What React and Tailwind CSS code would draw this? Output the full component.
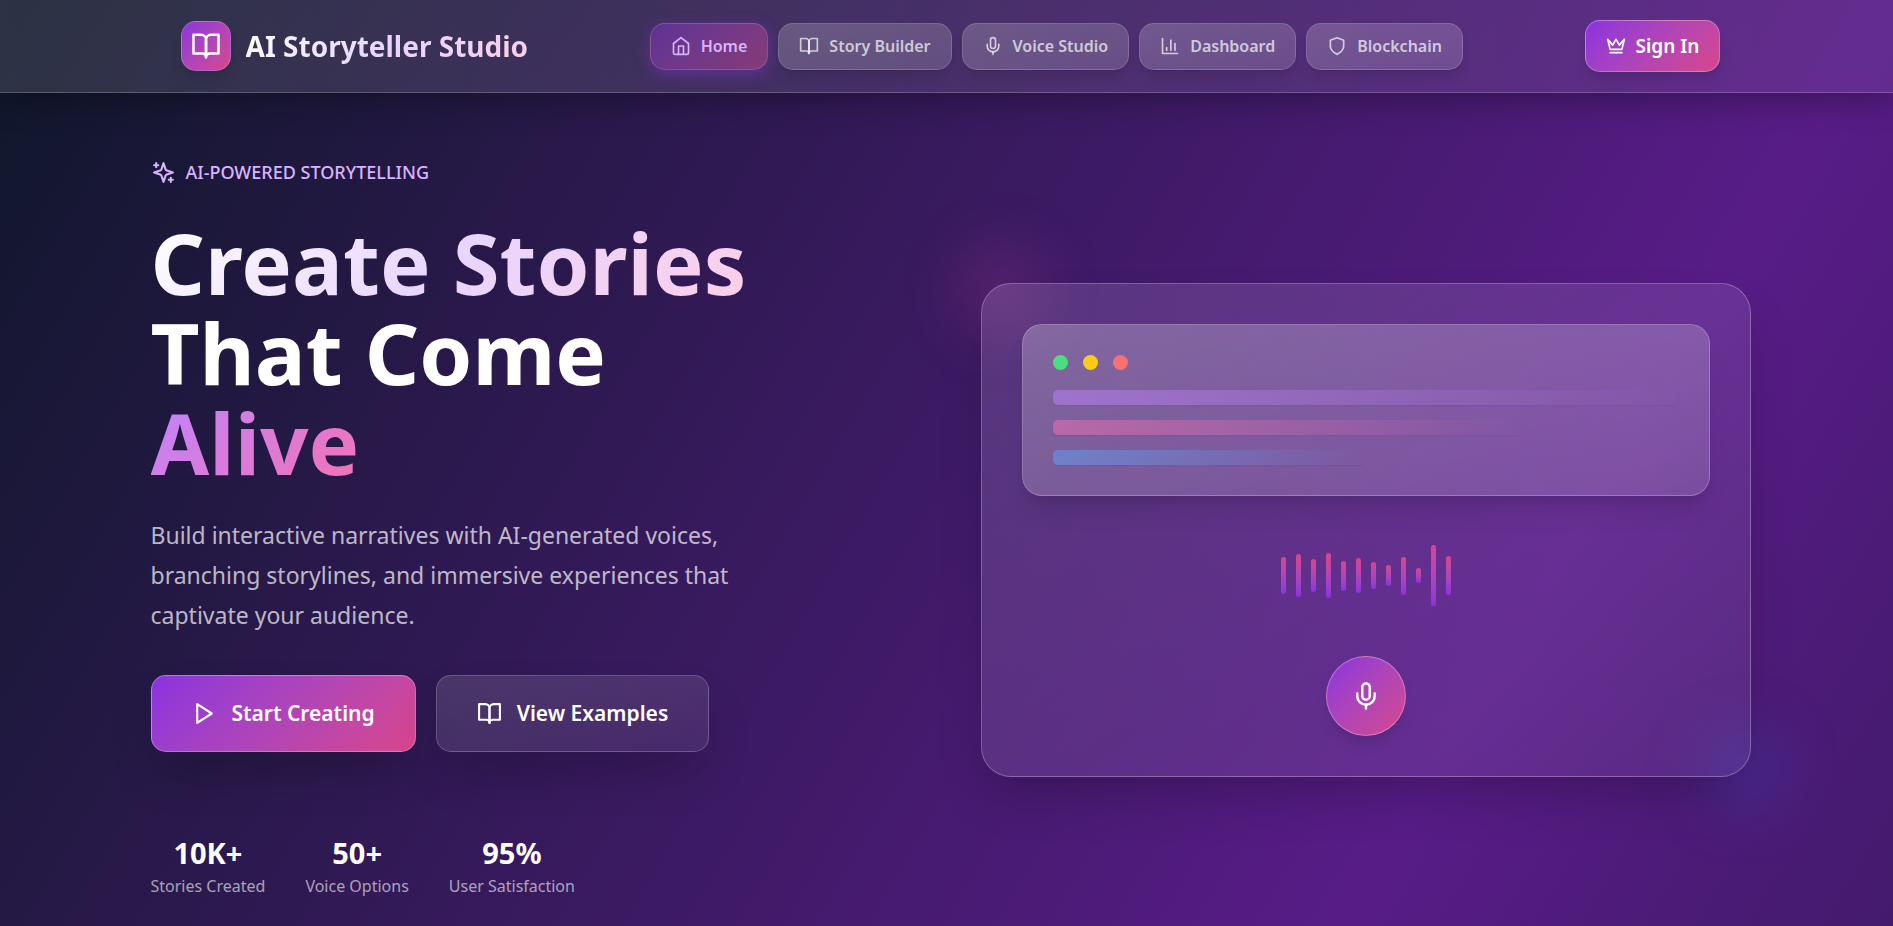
import React from 'react'

const icons = {
  home: ['m3 9 9-7 9 7v11a2 2 0 0 1-2 2H5a2 2 0 0 1-2-2z', 'M9 22V12h6v10'],
  book: ['M2 3h6a4 4 0 0 1 4 4v14a3 3 0 0 0-3-3H2z', 'M22 3h-6a4 4 0 0 0-4 4v14a3 3 0 0 1 3-3h7z'],
  mic: ['M12 2a3 3 0 0 0-3 3v7a3 3 0 0 0 6 0V5a3 3 0 0 0-3-3Z', 'M19 10v2a7 7 0 0 1-14 0v-2', 'M12 19v3'],
  chart: ['M3 3v18h18', 'M18 17V9', 'M13 17V5', 'M8 17v-3'],
  shield: ['M12 22s8-4 8-10V5l-8-3-8 3v7c0 6 8 10 8 10'],
  crown: ['m2 4 3 12h14l3-12-6 7-4-7-4 7-6-7zm3 16h14'],
  play: ['m5 3 14 9-14 9z'],
  sparkles: [
    'm12 3-1.912 5.813a2 2 0 0 1-1.275 1.275L3 12l5.813 1.912a2 2 0 0 1 1.275 1.275L12 21l1.912-5.813a2 2 0 0 1 1.275-1.275L21 12l-5.813-1.912a2 2 0 0 1-1.275-1.275L12 3Z',
    'M5 3v4',
    'M19 17v4',
    'M3 5h4',
    'M17 19h4',
  ],
}

function Icon({ name, size = 20 }) {
  return (
    <svg width={size} height={size} viewBox="0 0 24 24" fill="none" stroke="currentColor" strokeWidth="2" strokeLinecap="round" strokeLinejoin="round" aria-hidden="true">
      {icons[name].map(d => <path key={d} d={d} />)}
    </svg>
  )
}

const navItems = [
  { name: 'Home', icon: 'home', active: true },
  { name: 'Story Builder', icon: 'book' },
  { name: 'Voice Studio', icon: 'mic' },
  { name: 'Dashboard', icon: 'chart' },
  { name: 'Blockchain', icon: 'shield' },
]

const stats = [
  { value: '10K+', label: 'Stories Created' },
  { value: '50+', label: 'Voice Options' },
  { value: '95%', label: 'User Satisfaction' },
]

const bars = [37, 43, 33, 45, 30, 35, 27, 21, 38, 15, 61, 39]

const glass = 'border-white/15 bg-linear-to-br from-white/20 to-white/15 text-white/70 shadow-lg'
const activeGlass = 'border-white/15 bg-linear-135 from-[#9333ea]/40 to-[#ec4899]/40 text-[#d8b4fe] shadow-[0_4px_15px_rgba(147,51,234,0.4)]'

function Header() {
  return (
    <header className="border-b border-white/20 bg-linear-to-r from-white/12 to-white/7 pl-2 shadow-[0_8px_32px_rgba(0,0,0,0.3)]">
      <div className="mx-auto flex h-[92px] max-w-[1600px] items-center justify-between px-[30px]">
        <a href="#" className="flex items-center gap-[15px]">
          <span className="flex size-[50px] items-center justify-center rounded-[15px] border border-white/20 bg-linear-135 from-[#8b31df] to-[#d8458c] text-white shadow-lg">
            <Icon name="book" size={30} />
          </span>
          <span className="bg-[linear-gradient(135deg,#fff,#e9d5ff,#fbcfe8)] bg-clip-text text-[28px] font-bold text-transparent">AI Storyteller Studio</span>
        </a>
        <nav className="flex items-center gap-[10px]">
          {navItems.map(({ name, icon, active }) => (
            <a
              key={name}
              href="#"
              className={`flex h-[47px] items-center gap-[10px] rounded-[15px] border px-5 text-[16px] font-semibold ${active ? activeGlass : glass}`}
            >
              <Icon name={icon} />
              <span>{name}</span>
            </a>
          ))}
        </nav>
        <button className="flex h-[52px] items-center gap-[10px] rounded-[15px] border border-white/30 bg-linear-135 from-[#8b31df] to-[#d8458c] px-5 text-[19px] font-semibold text-white shadow-lg">
          <Icon name="crown" />
          Sign In
        </button>
      </div>
    </header>
  )
}

function Hero() {
  return (
    <section>
      <div className="flex items-center gap-[10px] text-[#d8b4fe]">
        <Icon name="sparkles" size={25} />
        <span className="text-[18px] leading-[25px] font-medium uppercase">AI-Powered Storytelling</span>
      </div>
      <h1 className="mt-8 text-[85px] leading-[90px] font-bold text-white">
        <span className="block w-fit bg-[linear-gradient(135deg,#fff,#e9d5ff,#fbcfe8)] bg-clip-text text-transparent">Create Stories</span>
        <span className="block">That Come</span>
        <span className="block w-fit bg-[linear-gradient(135deg,#c084fc,#f472b6)] bg-clip-text text-transparent">Alive</span>
      </h1>
      <p className="mt-7 max-w-[620px] text-[23px] leading-[40px] text-white/70">
        Build interactive narratives with AI-generated voices, branching storylines, and immersive experiences that captivate your audience.
      </p>
      <div className="mt-10 flex gap-5">
        <button className="flex h-[77px] items-center gap-[15px] rounded-[15px] border border-white/30 bg-linear-135 from-[#8b31df] to-[#d8458c] px-10 text-[21px] font-semibold text-white shadow-2xl">
          <Icon name="play" size={25} />
          Start Creating
        </button>
        <button className="flex h-[77px] items-center gap-[15px] rounded-[15px] border border-white/20 bg-linear-to-br from-white/13 to-white/7 px-10 text-[21px] font-semibold text-white shadow-2xl">
          <Icon name="book" size={25} />
          View Examples
        </button>
      </div>
      <div className="mt-20 flex gap-10">
        {stats.map(s => (
          <div key={s.label} className="text-center">
            <div className="text-[29px] leading-[42px] font-bold text-white">{s.value}</div>
            <div className="text-[16px] leading-[25px] text-white/60">{s.label}</div>
          </div>
        ))}
      </div>
    </section>
  )
}

function Preview() {
  return (
    <section className="relative">
      <div className="absolute -top-8 -left-5 size-20 rounded-full bg-[#c4409c]/25 blur-[30px]" />
      <div className="absolute -right-8 -bottom-8 size-20 rounded-full bg-[#3b62e6]/22 blur-[30px]" />
      <div className="relative rounded-[30px] border border-white/25 bg-linear-to-br from-[#e2c8ff]/17 to-[#e2c8ff]/8 p-10 shadow-2xl">
        <div className="rounded-[20px] border border-white/20 bg-linear-to-br from-white/25 to-white/15 p-[30px] shadow-xl">
          <div className="flex gap-[15px]">
            <span className="size-[15px] rounded-full bg-[#4ade80]" />
            <span className="size-[15px] rounded-full bg-[#facc15]" />
            <span className="size-[15px] rounded-full bg-[#f87171]" />
          </div>
          <div className="mt-5 space-y-[15px]">
            <div className="h-[15px] rounded-[5px] bg-linear-to-r from-[#c084fc]/50 to-transparent shadow-xs" />
            <div className="h-[15px] w-3/4 rounded-[5px] bg-linear-to-r from-[#f472b6]/50 to-transparent shadow-xs" />
            <div className="h-[15px] w-1/2 rounded-[5px] bg-linear-to-r from-[#60a5fa]/50 to-transparent shadow-xs" />
          </div>
        </div>
        <div className="mt-10 flex h-20 items-center justify-center gap-[10px]">
          {bars.map((h, i) => (
            <span key={i} className="w-[5px] rounded-full bg-linear-to-t from-[#8b31df] to-[#d8458c]" style={{ height: h }} />
          ))}
        </div>
        <div className="mt-10 flex justify-center">
          <button aria-label="Record" className="flex size-20 items-center justify-center rounded-full border border-white/30 bg-linear-135 from-[#8b31df] to-[#d8458c] text-white shadow-lg">
            <Icon name="mic" size={30} />
          </button>
        </div>
      </div>
    </section>
  )
}

export default function App() {
  return (
    <div className="min-h-screen overflow-hidden bg-[linear-gradient(to_bottom_right,#0f172a,#581c87,#0f172a)] bg-[length:100%_3200px] font-['Noto_Sans','Open_Sans',sans-serif]">
      <Header />
      <div className="pl-2">
        <main className="mx-auto grid max-w-[1600px] grid-cols-2 items-center gap-[60px] pt-[67px]">
          <Hero />
          <Preview />
        </main>
      </div>
    </div>
  )
}
